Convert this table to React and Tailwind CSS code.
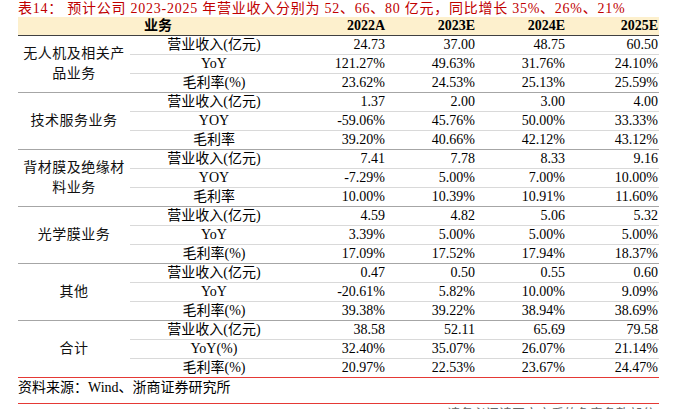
import React from "react";

const groups = [
  {
    name: ["无人机及相关产", "品业务"],
    rows: [
      ["营业收入(亿元)", "24.73", "37.00", "48.75", "60.50"],
      ["YoY", "121.27%", "49.63%", "31.76%", "24.10%"],
      ["毛利率(%)", "23.62%", "24.53%", "25.13%", "25.59%"],
    ],
  },
  {
    name: ["技术服务业务"],
    rows: [
      ["营业收入(亿元)", "1.37", "2.00", "3.00", "4.00"],
      ["YOY", "-59.06%", "45.76%", "50.00%", "33.33%"],
      ["毛利率", "39.20%", "40.66%", "42.12%", "43.12%"],
    ],
  },
  {
    name: ["背材膜及绝缘材", "料业务"],
    rows: [
      ["营业收入(亿元)", "7.41", "7.78", "8.33", "9.16"],
      ["YOY", "-7.29%", "5.00%", "7.00%", "10.00%"],
      ["毛利率", "10.00%", "10.39%", "10.91%", "11.60%"],
    ],
  },
  {
    name: ["光学膜业务"],
    rows: [
      ["营业收入(亿元)", "4.59", "4.82", "5.06", "5.32"],
      ["YoY", "3.39%", "5.00%", "5.00%", "5.00%"],
      ["毛利率(%)", "17.09%", "17.52%", "17.94%", "18.37%"],
    ],
  },
  {
    name: ["其他"],
    rows: [
      ["营业收入(亿元)", "0.47", "0.50", "0.55", "0.60"],
      ["YoY", "-20.61%", "5.82%", "10.00%", "9.09%"],
      ["毛利率(%)", "39.38%", "39.22%", "38.94%", "38.69%"],
    ],
  },
  {
    name: ["合计"],
    rows: [
      ["营业收入(亿元)", "38.58", "52.11", "65.69", "79.58"],
      ["YoY(%)", "32.40%", "35.07%", "26.07%", "21.14%"],
      ["毛利率(%)", "20.97%", "22.53%", "23.67%", "24.47%"],
    ],
  },
];

const years = ["2022A", "2023E", "2024E", "2025E"];

// Latin in Times widths, CJK falls back to Noto
const font = { fontFamily: "'Liberation Serif', 'Noto Sans CJK SC', serif" };

export default function App() {
  return (
    <div className="bg-white w-[681px] h-[409px] overflow-hidden text-black" style={font}>
      <div className="ml-[18px] w-[641px]">
        {/* Title */}
        <div className="h-[17px] text-[14px] leading-[17px] tracking-[0.75px] text-[#c00000] whitespace-nowrap">
          表14： 预计公司 2023-2025 年营业收入分别为 52、66、80 亿元，同比增长 35%、26%、21%
        </div>

        {/* Header */}
        <div className="flex h-[19px] bg-[#fdf0cd] border-b border-[#404040] text-[14px] leading-[18px] font-bold">
          <div className="w-[280px] text-center">业务</div>
          {years.map((y, i) => (
            <div
              key={y}
              className={`${i === 3 ? "w-[91px] pr-[1px]" : "w-[90px] pr-[3px]"} text-right`}
            >
              {y}
            </div>
          ))}
        </div>

        {/* Body */}
        {groups.map((g, gi) => (
          <div
            key={gi}
            className={`flex ${gi === 0 ? "" : "border-t border-[#a6a6a6]"}`}
          >
            <div className="w-[112px] flex flex-col items-center justify-center text-[14px] leading-[20px] tracking-[0.5px] text-[#111]">
              {g.name.map((n) => (
                <div key={n} className="whitespace-nowrap">{n}</div>
              ))}
            </div>
            <div className="flex-1">
              {g.rows.map((r, ri) => (
                <div
                  key={ri}
                  className={`flex text-[14px] ${
                    ri === 0
                      ? "h-[18px] leading-[18px]"
                      : "h-[19px] leading-[18px] border-t border-[#d9d9d9]"
                  }`}
                >
                  <div className="w-[168px] text-center">{r[0]}</div>
                  {r.slice(1).map((v, vi) => (
                    <div
                      key={vi}
                      className={`${vi === 3 ? "w-[91px] pr-[1px]" : "w-[90px] pr-[3px]"} text-right`}
                    >
                      {v}
                    </div>
                  ))}
                </div>
              ))}
            </div>
          </div>
        ))}

        {/* Footer */}
        <div className="border-t border-[#e53935] h-[26px] text-[14px] leading-[20px]">
          资料来源：Wind、浙商证券研究所
        </div>
        <div className="border-t border-[#e53935]"></div>
        <div className="text-right pr-[4px] text-[13px] leading-[14px] text-[#666] mt-[3px]">
          请务必阅读正文之后的免责条款部分
        </div>
      </div>
    </div>
  );
}
